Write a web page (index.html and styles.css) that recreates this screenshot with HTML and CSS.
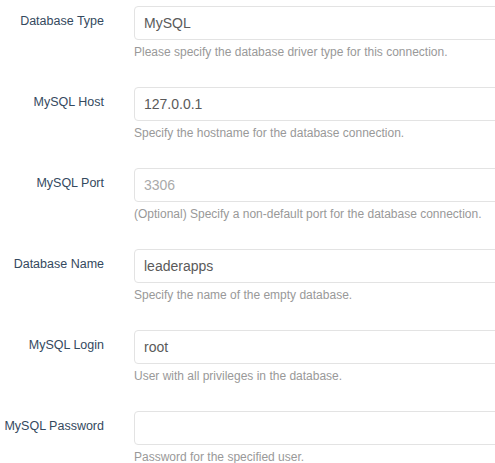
FILE: index.html
```html
<!DOCTYPE html>
<html>
<head>
<meta charset="utf-8">
<link rel="stylesheet" href="styles.css">
</head>
<body>
<form class="form">
  <div class="row">
    <label class="label">Database Type</label>
    <div class="control">
      <div class="input">MySQL</div>
      <p class="help">Please specify the database driver type for this connection.</p>
    </div>
  </div>
  <div class="row">
    <label class="label">MySQL Host</label>
    <div class="control">
      <div class="input">127.0.0.1</div>
      <p class="help">Specify the hostname for the database connection.</p>
    </div>
  </div>
  <div class="row">
    <label class="label">MySQL Port</label>
    <div class="control">
      <div class="input placeholder">3306</div>
      <p class="help">(Optional) Specify a non-default port for the database connection.</p>
    </div>
  </div>
  <div class="row">
    <label class="label">Database Name</label>
    <div class="control">
      <div class="input">leaderapps</div>
      <p class="help">Specify the name of the empty database.</p>
    </div>
  </div>
  <div class="row">
    <label class="label">MySQL Login</label>
    <div class="control">
      <div class="input">root</div>
      <p class="help">User with all privileges in the database.</p>
    </div>
  </div>
  <div class="row">
    <label class="label">MySQL Password</label>
    <div class="control">
      <div class="input"></div>
      <p class="help">Password for the specified user.</p>
    </div>
  </div>
</form>
</body>
</html>
```
FILE: styles.css
```css
html, body {
  margin: 0;
  padding: 0;
  background: #fff;
  overflow: hidden;
}
body {
  font-family: "Liberation Sans", Arial, sans-serif;
}
.form {
  padding-top: 6px;
}
.row {
  display: flex;
  gap: 30px;
  margin-bottom: 27px;
}
.label {
  width: 104px;
  flex: none;
  text-align: right;
  font-size: 12.5px;
  line-height: 30px;
  color: #34495e;
  white-space: nowrap;
}
.control {
  flex: none;
  width: 420px;
}
.input {
  box-sizing: border-box;
  height: 34px;
  border: 1px solid #e3e3e3;
  border-radius: 4px;
  padding: 0 9px;
  font-size: 14px;
  line-height: 32px;
  color: #5a5a5a;
}
.input.placeholder {
  color: #aaa;
}
.help {
  margin: 5px 0 0;
  font-size: 12px;
  line-height: 15px;
  color: #999;
  white-space: nowrap;
}
```
